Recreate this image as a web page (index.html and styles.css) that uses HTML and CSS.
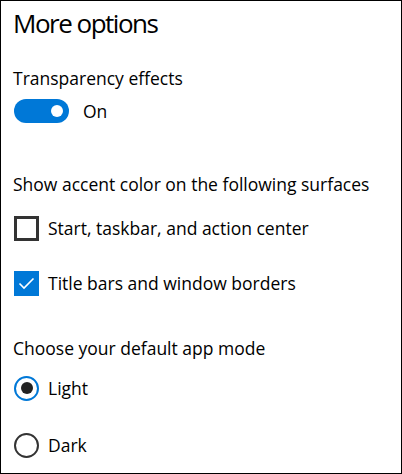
FILE: index.html
```html
<!DOCTYPE html>
<html>
<head>
<meta charset="utf-8">
<link rel="stylesheet" href="styles.css">
</head>
<body>
<div class="frame">
  <h1 class="title">More options</h1>
  <div class="label label-first">Transparency effects</div>
  <div class="row toggle-row">
    <span class="toggle"><span class="knob"></span></span>
    <span class="row-text on">On</span>
  </div>
  <div class="label label-section">Show accent color on the following surfaces</div>
  <div class="row check-row">
    <span class="checkbox"></span>
    <span class="row-text">Start, taskbar, and action center</span>
  </div>
  <div class="row check-row">
    <span class="checkbox checked">
      <svg width="25" height="25" viewBox="0 0 25 25"><path d="M5.5 12.5 L10 17 L19.5 7.5" fill="none" stroke="#fff" stroke-width="1.6"/></svg>
    </span>
    <span class="row-text">Title bars and window borders</span>
  </div>
  <div class="label label-section2">Choose your default app mode</div>
  <div class="row radio-row">
    <span class="radio selected"><span class="dot"></span></span>
    <span class="row-text">Light</span>
  </div>
  <div class="row radio-row">
    <span class="radio"></span>
    <span class="row-text">Dark</span>
  </div>
</div>
</body>
</html>
```
FILE: styles.css
```css
* { box-sizing: border-box; }
html, body { margin: 0; padding: 0; background: #fff; }
.frame {
  width: 402px;
  height: 474px;
  border: 1px solid #000;
  padding: 0 0 0 12px;
  font-family: "Open Sans", "Noto Sans", sans-serif;
  color: #000;
  display: flex;
  flex-direction: column;
}
.title {
  margin: 4px 0 0 0;
  font-weight: 400;
  font-size: 26px;
  line-height: 36px;
  letter-spacing: -1.5px;
}
.label {
  font-size: 17.5px;
  line-height: 22px;
}
.label-first { margin-top: 26px; }
.label-section { margin-top: 50px; }
.label-section2 { margin-top: 41px; }
.row {
  display: flex;
  align-items: center;
  gap: 9px;
  font-size: 17.5px;
}
.toggle-row { margin-top: 10px; height: 24px; gap: 14px; }
.check-row { height: 26px; }
.label-section + .check-row { margin-top: 20px; }
.check-row + .check-row { margin-top: 29px; }
.radio-row { height: 26px; }
.label-section2 + .radio-row { margin-top: 16px; }
.radio-row + .radio-row { margin-top: 31px; }
.toggle {
  width: 55px;
  height: 24px;
  border-radius: 12px;
  background: #0078d7;
  margin-left: 1px;
  display: flex;
  align-items: center;
  justify-content: flex-end;
  padding-right: 6px;
}
.knob {
  width: 12px;
  height: 12px;
  border-radius: 50%;
  background: #fff;
}
.checkbox {
  width: 25px;
  height: 25px;
  margin-left: 1px;
  border: 3px solid #333;
  flex: none;
}
.checkbox.checked {
  border: none;
  background: #0078d7;
}
.checkbox svg { display: block; }
.radio {
  width: 25px;
  height: 25px;
  margin-left: 1px;
  border-radius: 50%;
  border: 2.5px solid #333;
  flex: none;
  display: flex;
  align-items: center;
  justify-content: center;
}
.radio.selected { border-color: #0078d7; }
.dot {
  width: 12px;
  height: 12px;
  border-radius: 50%;
  background: #222;
}
```
